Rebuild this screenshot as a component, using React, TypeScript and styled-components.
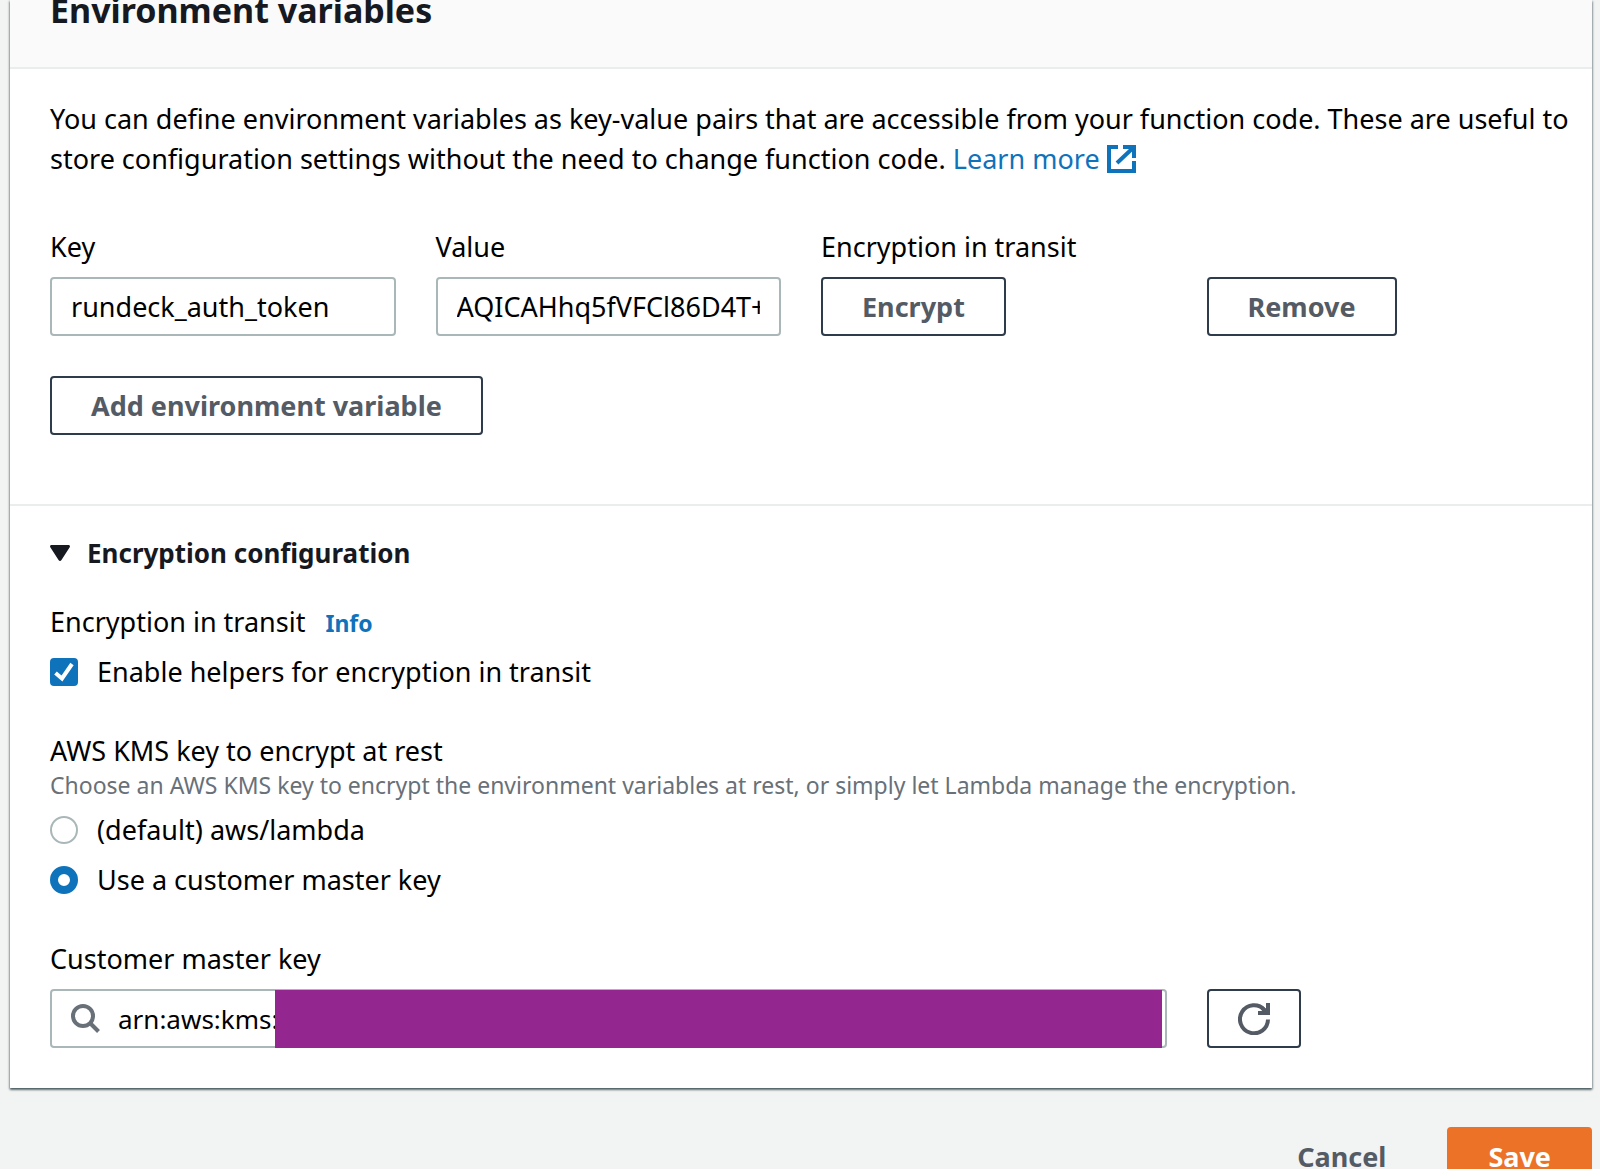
import React, { useState } from "react";
import styled, { createGlobalStyle, css } from "styled-components";

const color = {
  page: "#f2f3f3",
  panel: "#ffffff",
  header: "#fafafa",
  rule: "#eaeded",
  text: "#000000",
  heading: "#16191f",
  muted: "#687078",
  button: "#545b64",
  buttonBorder: "#2d3b4a",
  fieldBorder: "#aab7b8",
  link: "#0f73bb",
  accent: "#0f73bb",
  primary: "#eb7226",
  redaction: "#93278f",
};

const GlobalStyle = createGlobalStyle`
  *, *::before, *::after { box-sizing: border-box; }
  body {
    margin: 0;
    background: ${color.page};
    color: ${color.text};
    font-family: "Noto Sans", "Open Sans", sans-serif;
    font-size: 27px;
    line-height: 40px;
  }
  input, button { font: inherit; color: inherit; }
`;

const Page = styled.main`
  height: 100vh;
  padding: 0 8px 0 10px;
  overflow: hidden;
`;

const Panel = styled.section`
  background: ${color.panel};
  box-shadow: 0 2px 2px rgba(0, 28, 36, 0.5), 1px 1px 2px rgba(0, 28, 36, 0.25),
    -1px 1px 2px rgba(0, 28, 36, 0.25);
`;

const PanelHeader = styled.header`
  padding: 0 40px 47px;
  background: ${color.header};
  border-bottom: 2px solid ${color.rule};
`;

const Title = styled.h2`
  margin: 0;
  color: ${color.heading};
  font-size: 34px;
  line-height: 20px;
`;

const Section = styled.div`
  padding: 30px 40px 69px;

  & + & {
    padding: 27px 40px 40px;
    border-top: 2px solid ${color.rule};
  }
`;

const Description = styled.p`
  margin: 0 -24px 48px 0;
`;

const Link = styled.a`
  color: ${color.link};
  text-decoration: none;

  svg {
    vertical-align: -4px;
  }
`;

const InfoLink = styled.a`
  color: ${color.link};
  font-size: 23px;
  font-weight: 700;
  text-decoration: none;
`;

const Columns = styled.div`
  display: grid;
  grid-template-columns: repeat(4, minmax(0, 1fr));
  column-gap: 40px;
  align-items: end;
`;

const Field = styled.div<{ $span?: number }>`
  display: flex;
  flex-direction: column;
  align-items: flex-start;
  gap: 10px;
  grid-column: span ${(p) => p.$span ?? 1};
`;

const control = css`
  height: 59px;
  border: 2px solid ${color.fieldBorder};
  border-radius: 4px;
`;

const TextInput = styled.input`
  ${control}
  width: 100%;
  padding: 0 19px;
  background: ${color.panel};
  outline: none;
`;

const SearchBox = styled.div`
  ${control}
  position: relative;
  display: flex;
  align-items: center;
  gap: 18px;
  width: 100%;
  padding: 0 19px;
`;

const SearchInput = styled.input`
  flex: 1;
  min-width: 0;
  padding: 0;
  border: 0;
  background: none;
  font-size: 26px;
  outline: none;
`;

const Redaction = styled.span`
  position: absolute;
  top: -1px;
  right: 3px;
  bottom: -2px;
  left: 223px;
  background: ${color.redaction};
`;

const Button = styled.button<{ $variant?: "primary" | "link" }>`
  height: 59px;
  padding: 0 39px;
  border: 2px solid ${color.buttonBorder};
  border-radius: 4px;
  background: ${color.panel};
  color: ${color.button};
  font-weight: 700;
  cursor: pointer;

  ${(p) =>
    p.$variant === "primary" &&
    css`
      border-color: ${color.primary};
      background: ${color.primary};
      color: #ffffff;
    `}
  ${(p) =>
    p.$variant === "link" &&
    css`
      border-color: transparent;
      background: none;
    `}
`;

const IconButton = styled(Button)`
  display: flex;
  align-items: center;
  justify-content: center;
  width: 94px;
  padding: 0;
`;

const AddRow = styled.div`
  margin-top: 40px;
`;

const Expander = styled.button`
  display: flex;
  align-items: center;
  gap: 17px;
  margin: 0 0 29px;
  padding: 0;
  border: 0;
  background: none;
  color: ${color.heading};
  font-size: 26px;
  font-weight: 700;
  cursor: pointer;
`;

const Group = styled.fieldset`
  display: flex;
  flex-direction: column;
  gap: 10px;
  margin: 0 0 39px;
  padding: 0;
  border: 0;
`;

const GroupHeading = styled.div`
  display: flex;
  align-items: baseline;
  gap: 20px;
  height: 40px;
`;

const Hint = styled.p`
  margin: -10px 0 0;
  color: ${color.muted};
  font-size: 23px;
  line-height: 29px;
`;

const Choice = styled.label`
  display: flex;
  align-items: center;
  gap: 19px;
`;

const CheckWrap = styled.span`
  display: grid;
  place-items: center;

  & > * {
    grid-area: 1 / 1;
  }
`;

const Checkbox = styled.input`
  appearance: none;
  width: 28px;
  height: 28px;
  margin: 0;
  border: 2px solid ${color.fieldBorder};
  border-radius: 4px;
  background: ${color.panel};

  &:checked {
    border-color: ${color.accent};
    background: ${color.accent};
  }
`;

const Radio = styled.input`
  appearance: none;
  width: 28px;
  height: 28px;
  margin: 0;
  border: 2px solid ${color.fieldBorder};
  border-radius: 50%;
  background: ${color.panel};

  &:checked {
    border: 8px solid ${color.accent};
  }
`;

const Actions = styled.footer`
  display: flex;
  justify-content: flex-end;
  gap: 20px;
  padding-top: 39px;
`;

const ExternalIcon = () => (
  <svg width="29" height="28" viewBox="0 0 29 28" fill="none" stroke="currentColor" strokeWidth="4" aria-hidden="true">
    <path d="M11 2H2v24h25V16" />
    <path d="M16 2h11v11M27 2 10 18" />
  </svg>
);

const CaretIcon = () => (
  <svg width="20" height="16" viewBox="0 0 20 16" fill="currentColor" aria-hidden="true">
    <path d="M1.500 0h17c1.200 0 1.800 1.200 1.200 2.200l-8.400 13c-.6 1-2 1-2.600 0L.3 2.200C-.3 1.200.3 0 1.500 0z" />
  </svg>
);

const TickIcon = () => (
  <svg width="20" height="20" viewBox="0 0 20 20" fill="none" stroke="#ffffff" strokeWidth="4" aria-hidden="true" pointerEvents="none">
    <path d="M1.500 11 8 16.500 18 2" />
  </svg>
);

const SearchIcon = () => (
  <svg width="29" height="29" viewBox="0 0 29 29" fill="none" stroke={color.muted} strokeWidth="4" aria-hidden="true">
    <circle cx="12" cy="12" r="10" />
    <path d="m19 19 8.500 8.500" />
  </svg>
);

const RefreshIcon = () => (
  <svg width="32" height="32" viewBox="0 0 32 32" fill="none" stroke="currentColor" strokeWidth="4" aria-hidden="true">
    <path d="M30 16.500A14 14 0 1 1 26.500 7" />
    <path d="M30 0v10H20" />
    <path d="M24 5l6 5" />
  </svg>
);

export default function App() {
  const [open, setOpen] = useState(true);
  const [helpers, setHelpers] = useState(true);
  const [keyType, setKeyType] = useState("customer");

  return (
    <>
      <GlobalStyle />
      <Page>
        <Panel>
          <PanelHeader>
            <Title>Environment variables</Title>
          </PanelHeader>
          <Section>
            <Description>
              You can define environment variables as key-value pairs that are accessible from your function code.
              These are useful to store configuration settings without the need to change function code.{" "}
              <Link href="#learn-more">
                Learn more <ExternalIcon />
              </Link>
            </Description>
            <Columns>
              <Field>
                <label htmlFor="env-key">Key</label>
                <TextInput id="env-key" defaultValue="rundeck_auth_token" />
              </Field>
              <Field>
                <label htmlFor="env-value">Value</label>
                <TextInput id="env-value" defaultValue="AQICAHhq5fVFCl86D4T+" />
              </Field>
              <Field>
                <span>Encryption in transit</span>
                <Button type="button">Encrypt</Button>
              </Field>
              <Field>
                <Button type="button">Remove</Button>
              </Field>
            </Columns>
            <AddRow>
              <Button type="button">Add environment variable</Button>
            </AddRow>
          </Section>
          <Section>
            <Expander type="button" aria-expanded={open} onClick={() => setOpen(!open)}>
              <CaretIcon />
              Encryption configuration
            </Expander>
            {open && (
              <>
                <Group>
                  <GroupHeading>
                    <span>Encryption in transit</span>
                    <InfoLink href="#info">Info</InfoLink>
                  </GroupHeading>
                  <Choice>
                    <CheckWrap>
                      <Checkbox type="checkbox" checked={helpers} onChange={() => setHelpers(!helpers)} />
                      {helpers && <TickIcon />}
                    </CheckWrap>
                    Enable helpers for encryption in transit
                  </Choice>
                </Group>
                <Group>
                  <GroupHeading>AWS KMS key to encrypt at rest</GroupHeading>
                  <Hint>
                    Choose an AWS KMS key to encrypt the environment variables at rest, or simply let Lambda manage
                    the encryption.
                  </Hint>
                  <Choice>
                    <Radio
                      type="radio"
                      name="kms"
                      checked={keyType === "default"}
                      onChange={() => setKeyType("default")}
                    />
                    (default) aws/lambda
                  </Choice>
                  <Choice>
                    <Radio
                      type="radio"
                      name="kms"
                      checked={keyType === "customer"}
                      onChange={() => setKeyType("customer")}
                    />
                    Use a customer master key
                  </Choice>
                </Group>
                <Columns>
                  <Field $span={3}>
                    <label htmlFor="master-key">Customer master key</label>
                    <SearchBox>
                      <SearchIcon />
                      <SearchInput id="master-key" defaultValue="arn:aws:kms:" />
                      <Redaction />
                    </SearchBox>
                  </Field>
                  <Field>
                    <IconButton type="button" aria-label="Refresh keys">
                      <RefreshIcon />
                    </IconButton>
                  </Field>
                </Columns>
              </>
            )}
          </Section>
        </Panel>
        <Actions>
          <Button type="button" $variant="link">
            Cancel
          </Button>
          <Button type="button" $variant="primary">
            Save
          </Button>
        </Actions>
      </Page>
    </>
  );
}
